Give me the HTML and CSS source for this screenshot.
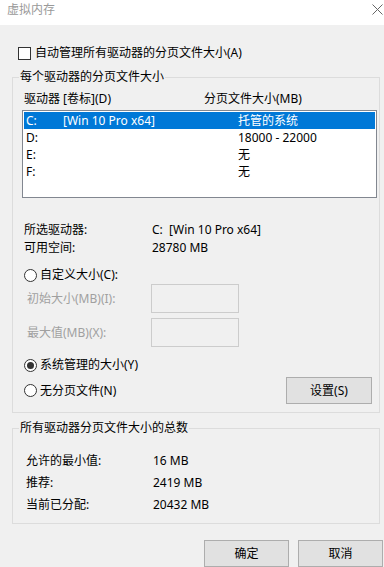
FILE: index.html
```html
<!DOCTYPE html>
<html>
<head>
    <meta charset="utf-8">
    <title>虚拟内存</title>
    <link rel="stylesheet" href="styles.css">
</head>
<body>
    <div class="titlebar">
        <span class="title">虚拟内存</span>
        <svg class="close" viewBox="0 0 11 11"><path d="M0.5 0.5L10.5 10.5M10.5 0.5L0.5 10.5"/></svg>
    </div>
    <div class="dialog">
        <div class="check-row"><span class="checkbox"></span>自动管理所有驱动器的分页文件大小(A)</div>

        <fieldset class="group">
            <legend>每个驱动器的分页文件大小</legend>
            <div class="list-head">
                <span>驱动器 [卷标](D)</span>
                <span>分页文件大小(MB)</span>
            </div>
            <div class="listbox">
                <div class="row selected"><span>C:</span><span>[Win 10 Pro x64]</span><span>托管的系统</span></div>
                <div class="row"><span>D:</span><span></span><span>18000 - 22000</span></div>
                <div class="row"><span>E:</span><span></span><span>无</span></div>
                <div class="row"><span>F:</span><span></span><span>无</span></div>
            </div>
            <div class="info">
                <span>所选驱动器:</span><span>C:&nbsp;&nbsp;[Win 10 Pro x64]</span>
                <span>可用空间:</span><span>28780 MB</span>
            </div>
            <div class="radio-row"><span class="radio"></span>自定义大小(C):</div>
            <div class="size-row">
                <span class="disabled">初始大小(MB)(I):</span>
                <span class="input"></span>
            </div>
            <div class="size-row second">
                <span class="disabled">最大值(MB)(X):</span>
                <span class="input"></span>
            </div>
            <div class="radio-row spaced"><span class="radio checked"></span>系统管理的大小(Y)</div>
            <div class="last-row">
                <div class="radio-row flat"><span class="radio"></span>无分页文件(N)</div>
                <button class="button">设置(S)</button>
            </div>
        </fieldset>

        <fieldset class="group totals-group">
            <legend>所有驱动器分页文件大小的总数</legend>
            <div class="totals">
                <span>允许的最小值:</span><span>16 MB</span>
                <span>推荐:</span><span>2419 MB</span>
                <span>当前已分配:</span><span>20432 MB</span>
            </div>
        </fieldset>

        <div class="footer">
            <button class="button wide">确定</button>
            <button class="button wide">取消</button>
        </div>
    </div>
</body>
</html>
```

FILE: styles.css
```css
body {
    margin: 0;
    width: 384px;
    height: 567px;
    overflow: hidden;
    background: #f0f0f0;
    font-family: "Noto Sans", "Noto Sans CJK SC", sans-serif;
    font-size: 12px;
    color: #000;
}

.titlebar {
    height: 25px;
    box-sizing: border-box;
    background: #fff;
    display: flex;
    justify-content: space-between;
    align-items: flex-start;
    padding: 2px 1px 0 7px;
}
.title {
    color: #999;
    line-height: 16px;
}
.close {
    width: 11px;
    height: 11px;
    margin-top: 2px;
    fill: none;
    stroke: #666;
    stroke-width: 1;
}

.dialog {
    padding-left: 12px;
}

.check-row {
    display: flex;
    align-items: center;
    height: 16px;
    line-height: 16px;
    margin-top: 20px;
    padding-left: 6px;
}
.checkbox {
    width: 13px;
    height: 13px;
    box-sizing: border-box;
    border: 1px solid #333;
    background: #fff;
    margin-right: 4px;
}

.group {
    margin: 8px 0 0;
    padding: 0;
    width: 368px;
    min-width: 0;
    box-sizing: border-box;
    border: 1px solid #dcdcdc;
}
.group legend {
    margin-left: 6px;
    padding: 0 1px;
    line-height: 16px;
}

.list-head {
    display: grid;
    grid-template-columns: 180px auto;
    margin-top: 6px;
    padding-left: 11px;
    line-height: 16px;
}

.listbox {
    margin: 3px 0 0 9px;
    width: 355px;
    height: 88px;
    box-sizing: border-box;
    border: 1px solid #828790;
    background: #fff;
    padding: 1px;
}
.row {
    display: grid;
    grid-template-columns: 37px 175px auto;
    height: 17px;
    line-height: 17px;
    padding-left: 2px;
}
.row.selected {
    background: #0078d7;
    color: #fff;
}

.info {
    display: grid;
    grid-template-columns: 128px auto;
    margin-top: 23px;
    padding-left: 11px;
    line-height: 18px;
}

.radio-row {
    display: flex;
    align-items: center;
    height: 18px;
    line-height: 18px;
    margin: 9px 0 0 11px;
}
.radio-row.flat {
    margin: 0;
}
.radio {
    width: 13px;
    height: 13px;
    box-sizing: border-box;
    border: 1px solid #333;
    border-radius: 50%;
    background: #fff;
    margin-right: 3px;
    display: flex;
    align-items: center;
    justify-content: center;
}
.radio.checked::after {
    content: "";
    width: 7px;
    height: 7px;
    border-radius: 50%;
    background: #333;
}

.size-row {
    display: grid;
    grid-template-columns: 124px 88px;
    align-items: center;
    padding-left: 14px;
}
.size-row.second {
    margin-top: 5px;
}
.disabled {
    color: #a0a0a0;
    line-height: 18px;
}
.input {
    height: 29px;
    box-sizing: border-box;
    border: 1px solid #cccccc;
    background: #f0f0f0;
}

.last-row {
    display: flex;
    align-items: center;
    justify-content: space-between;
    margin: 3px 7px 8px 11px;
}

.button {
    width: 86px;
    height: 27px;
    box-sizing: border-box;
    padding: 0;
    border: 1px solid #adadad;
    background: #e1e1e1;
    font: inherit;
    line-height: 25px;
    color: #000;
    text-align: center;
}
.button.wide {
    width: 85px;
    flex-shrink: 0;
}

.totals-group {
    margin-top: 7px;
}
.totals {
    display: grid;
    grid-template-columns: 127px auto;
    margin: 14px 0 7px;
    padding-left: 13px;
    line-height: 22px;
}

.footer {
    display: flex;
    gap: 9px;
    margin: 16px 0 0 192px;
}
```
